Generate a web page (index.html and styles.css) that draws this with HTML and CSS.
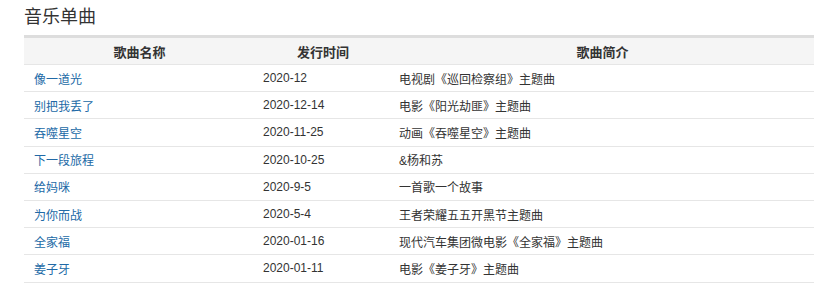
FILE: index.html
```html
<!DOCTYPE html>
<html lang="zh">
<head>
<meta charset="utf-8">
<title>音乐单曲</title>
<link rel="stylesheet" href="styles.css">
</head>
<body>
<div class="page">
  <h2 class="title">音乐单曲</h2>
  <table class="songs">
    <colgroup>
      <col class="c-name">
      <col class="c-date">
      <col class="c-desc">
    </colgroup>
    <thead>
      <tr><th>歌曲名称</th><th>发行时间</th><th>歌曲简介</th></tr>
    </thead>
    <tbody>
      <tr><td class="name"><a href="#">像一道光</a></td><td>2020-12</td><td>电视剧《巡回检察组》主题曲</td></tr>
      <tr><td class="name"><a href="#">别把我丢了</a></td><td>2020-12-14</td><td>电影《阳光劫匪》主题曲</td></tr>
      <tr><td class="name"><a href="#">吞噬星空</a></td><td>2020-11-25</td><td>动画《吞噬星空》主题曲</td></tr>
      <tr><td class="name"><a href="#">下一段旅程</a></td><td>2020-10-25</td><td>&amp;杨和苏</td></tr>
      <tr><td class="name"><a href="#">给妈咪</a></td><td>2020-9-5</td><td>一首歌一个故事</td></tr>
      <tr><td class="name"><a href="#">为你而战</a></td><td>2020-5-4</td><td>王者荣耀五五开黑节主题曲</td></tr>
      <tr><td class="name"><a href="#">全家福</a></td><td>2020-01-16</td><td>现代汽车集团微电影《全家福》主题曲</td></tr>
      <tr><td class="name"><a href="#">姜子牙</a></td><td>2020-01-11</td><td>电影《姜子牙》主题曲</td></tr>
    </tbody>
  </table>
</div>
</body>
</html>
```

FILE: styles.css
```css
html, body {
  margin: 0;
  padding: 0;
  background: #fff;
}
body {
  font-family: "Liberation Sans", Arial, "Noto Sans CJK SC", sans-serif;
  font-size: 12px;
  color: #333;
}
.page {
  padding: 0 10px 0 24px;
}
.title {
  margin: 0;
  height: 35px;
  line-height: 31px;
  font-size: 18px;
  font-weight: normal;
  color: #333;
  font-family: "Noto Sans CJK SC", sans-serif;
}
.songs {
  width: 790px;
  border-collapse: collapse;
  table-layout: fixed;
}
.c-name { width: 231px; }
.c-date { width: 136px; }
.c-desc { width: 423px; }
.songs th {
  background: #f5f5f5;
  border-top: 3px solid #ddd;
  border-bottom: 1px solid #e6e6e6;
  height: 26px;
  padding: 0 8px;
  font-size: 13px;
  font-weight: bold;
  text-align: center;
  color: #333;
  font-family: "Noto Sans CJK SC", sans-serif;
}
.songs td {
  height: 26.2px;
  padding: 0 8px;
  border-bottom: 1px solid #e6e6e6;
  text-align: left;
  vertical-align: middle;
  white-space: nowrap;
}
.songs td.name {
  padding-left: 10px;
}
.songs a {
  color: #2169a6;
  text-decoration: none;
}
```
